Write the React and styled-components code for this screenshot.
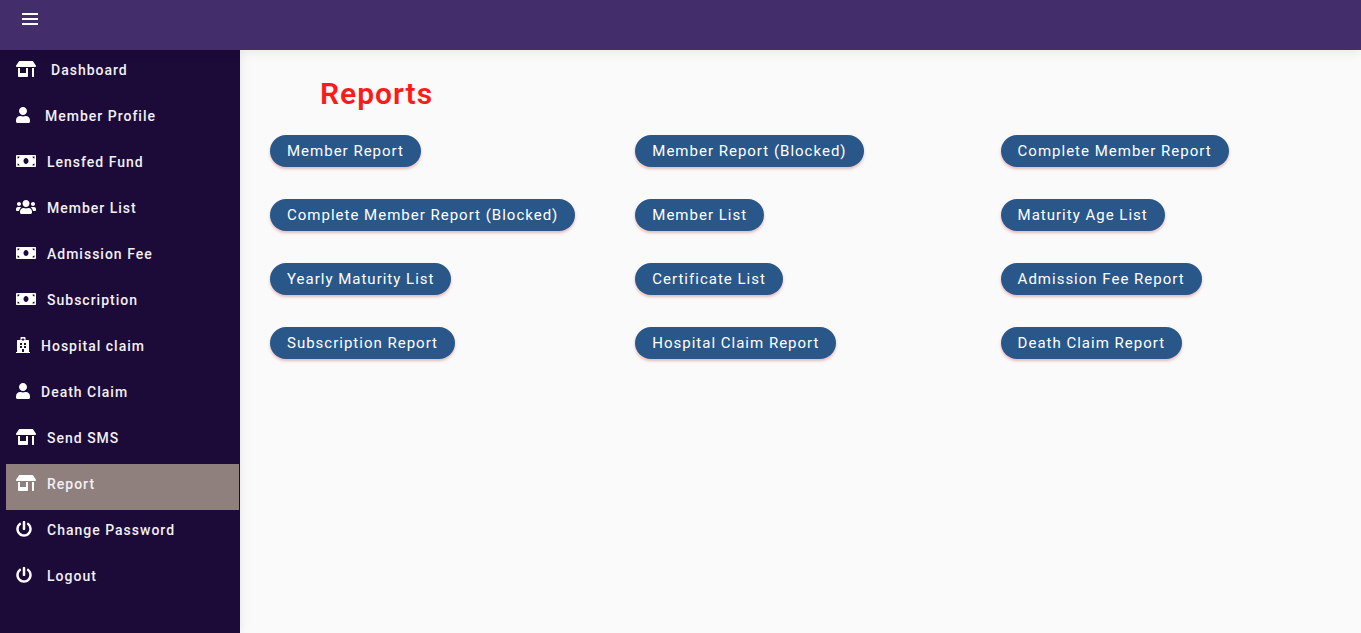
import React from 'react';
import styled, { createGlobalStyle } from 'styled-components';
import { FaStoreAlt, FaUser, FaMoneyBill, FaUsers, FaHospital, FaPowerOff } from 'react-icons/fa';

const GlobalStyle = createGlobalStyle`
  html, body {
    margin: 0;
    height: 100%;
    overflow: hidden;
    background: #fafafa;
    font-family: Roboto, "Liberation Sans", sans-serif;
  }
`;

const Page = styled.div`
  display: flex;
  flex-direction: column;
  height: 633px;
`;

const TopBar = styled.header`
  position: relative;
  z-index: 2;
  flex: none;
  height: 50px;
  padding: 13px 0 0 22px;
  box-sizing: border-box;
  background: #432d6b;
  box-shadow: 0 1px 12px rgba(0, 0, 0, 0.09);
`;

const MenuIcon = styled.svg`
  display: block;
  width: 16px;
  height: 12px;
  fill: #fff;
`;

const Body = styled.div`
  display: flex;
  flex: 1;
  min-height: 0;
`;

const Sidebar = styled.nav`
  flex: none;
  width: 240px;
  padding-left: 6px;
  box-sizing: border-box;
  background: #1c0b38;
  box-shadow: 0 0 10px rgba(0, 0, 0, 0.09);
`;

const NavRow = styled.div`
  display: flex;
  align-items: center;
  width: 233px;
  height: 46px;
  padding: 0 0 6px 10px;
  box-sizing: border-box;
  color: #f2f0f6;
  background: ${(p) => (p.$active ? '#8f7f7d' : 'transparent')};
  svg {
    flex: none;
    width: ${(p) => p.$iconWidth}px;
    height: 16px;
    margin-top: -2px;
    color: #fff;
  }
`;

const NavLabel = styled.span`
  margin-left: ${(p) => p.$gap}px;
  font-size: 14px;
  font-weight: 500;
  letter-spacing: 1px;
`;

const Main = styled.main`
  flex: 1;
  padding: 23px 0 0 30px;
`;

const Title = styled.h1`
  margin: 0 0 21px 50px;
  color: #ff1a1a;
  font-size: 30px;
  line-height: 41px;
  font-weight: 600;
  letter-spacing: 1px;
`;

const ReportGrid = styled.div`
  display: grid;
  grid-template-columns: repeat(3, 365.3px);
  row-gap: 32px;
  justify-items: start;
`;

const ReportButton = styled.button`
  height: 32px;
  padding: 0 17px;
  border: 0;
  border-radius: 16px;
  background: #29578a;
  color: #fff;
  font-family: inherit;
  font-size: 15px;
  font-weight: 400;
  letter-spacing: 1px;
  white-space: nowrap;
  box-shadow: 0 2px 3px rgba(200, 90, 90, 0.4);
`;

const NAV = [
  { icon: FaStoreAlt, width: 20, label: 'Dashboard', gap: 15 },
  { icon: FaUser, width: 14, label: 'Member Profile', gap: 15 },
  { icon: FaMoneyBill, width: 20, label: 'Lensfed Fund', gap: 11 },
  { icon: FaUsers, width: 20, label: 'Member List', gap: 11 },
  { icon: FaMoneyBill, width: 20, label: 'Admission Fee', gap: 11 },
  { icon: FaMoneyBill, width: 20, label: 'Subscription', gap: 11 },
  { icon: FaHospital, width: 14, label: 'Hospital claim', gap: 11 },
  { icon: FaUser, width: 14, label: 'Death Claim', gap: 11 },
  { icon: FaStoreAlt, width: 20, label: 'Send SMS', gap: 11 },
  { icon: FaStoreAlt, width: 20, label: 'Report', gap: 11, active: true },
  { icon: FaPowerOff, width: 16, label: 'Change Password', gap: 15 },
  { icon: FaPowerOff, width: 16, label: 'Logout', gap: 15 },
];

const REPORTS = [
  'Member Report',
  'Member Report (Blocked)',
  'Complete Member Report',
  'Complete Member Report (Blocked)',
  'Member List',
  'Maturity Age List',
  'Yearly Maturity List',
  'Certificate List',
  'Admission Fee Report',
  'Subscription Report',
  'Hospital Claim Report',
  'Death Claim Report',
];

export default function App() {
  return (
    <Page>
      <GlobalStyle />
      <TopBar>
        <MenuIcon viewBox="0 0 16 12">
          <rect width="16" height="2" />
          <rect y="5" width="16" height="2" />
          <rect y="10" width="16" height="2" />
        </MenuIcon>
      </TopBar>
      <Body>
        <Sidebar>
          {NAV.map(({ icon: Icon, width, label, gap, active }) => (
            <NavRow key={label} $active={active} $iconWidth={width}>
              <Icon />
              <NavLabel $gap={gap}>{label}</NavLabel>
            </NavRow>
          ))}
        </Sidebar>
        <Main>
          <Title>Reports</Title>
          <ReportGrid>
            {REPORTS.map((name) => (
              <ReportButton key={name}>{name}</ReportButton>
            ))}
          </ReportGrid>
        </Main>
      </Body>
    </Page>
  );
}
